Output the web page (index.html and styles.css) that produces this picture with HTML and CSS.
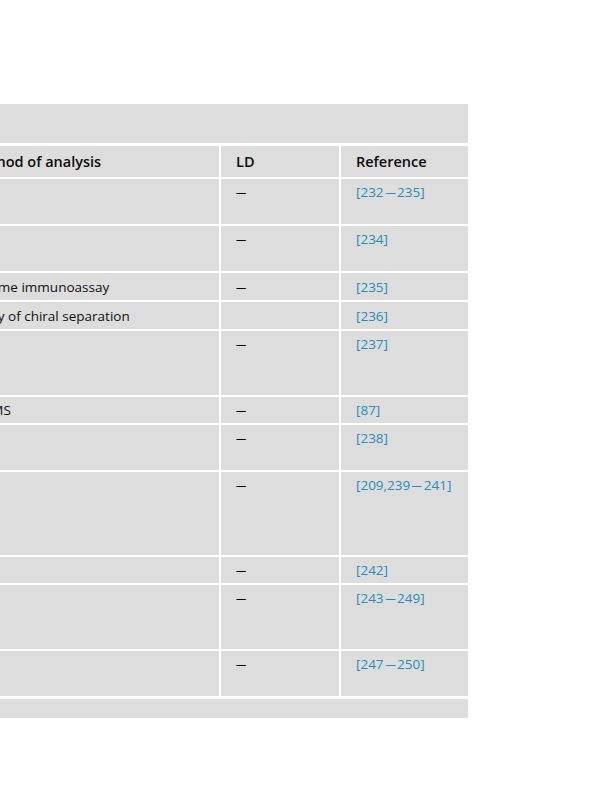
FILE: index.html
```html
<!DOCTYPE html>
<html lang="en">
<head>
<meta charset="utf-8">
<title>Table</title>
<link rel="stylesheet" href="styles.css">
</head>
<body>
<div class="sheet">
  <div class="caption"></div>
  <table class="grid">
    <colgroup>
      <col class="col-method">
      <col class="col-ld">
      <col class="col-ref">
    </colgroup>
    <thead>
      <tr class="head">
        <th>Method of analysis</th>
        <th>LD</th>
        <th>Reference</th>
      </tr>
    </thead>
    <tbody>
      <tr class="r2"><td></td><td><span class="dash ld">—</span></td><td><a class="ref">[232<span class="dash">—</span>235]</a></td></tr>
      <tr class="r2"><td></td><td><span class="dash ld">—</span></td><td><a class="ref">[234]</a></td></tr>
      <tr class="r1"><td>Enzyme immunoassay</td><td><span class="dash ld">—</span></td><td><a class="ref">[235]</a></td></tr>
      <tr class="r1"><td>Study of chiral separation</td><td></td><td><a class="ref">[236]</a></td></tr>
      <tr class="r3"><td></td><td><span class="dash ld">—</span></td><td><a class="ref">[237]</a></td></tr>
      <tr class="r1s"><td>LC–MS</td><td><span class="dash ld">—</span></td><td><a class="ref">[87]</a></td></tr>
      <tr class="r2"><td></td><td><span class="dash ld">—</span></td><td><a class="ref">[238]</a></td></tr>
      <tr class="r4"><td></td><td><span class="dash ld">—</span></td><td><a class="ref">[209,239<span class="dash">—</span>241]</a></td></tr>
      <tr class="r1s"><td></td><td><span class="dash ld">—</span></td><td><a class="ref">[242]</a></td></tr>
      <tr class="r3"><td></td><td><span class="dash ld">—</span></td><td><a class="ref">[243<span class="dash">—</span>249]</a></td></tr>
      <tr class="r2"><td></td><td><span class="dash ld">—</span></td><td><a class="ref">[247<span class="dash">—</span>250]</a></td></tr>
    </tbody>
  </table>
  <div class="foot"></div>
</div>
</body>
</html>
```

FILE: styles.css
```css
html, body {
  margin: 0;
  padding: 0;
  background: #ffffff;
}

body {
  font-family: "Open Sans", "Noto Sans", sans-serif;
  color: #111111;
  overflow: hidden;
}

.sheet {
  width: 518px;
  margin: 104px 0 0 -48px;
}

.caption {
  height: 39px;
  margin-right: 2px;
  background: #dedddd;
}

.foot {
  height: 19px;
  margin-top: 1px;
  margin-right: 2px;
  background: #dedddd;
}

.grid {
  width: 518px;
  table-layout: fixed;
  border-collapse: separate;
  border-spacing: 2px;
  margin-top: 1px;
  background: #ffffff;
}

.col-method { width: 265px; }
.col-ld { width: 118px; }
.col-ref { width: 127px; }

.grid th,
.grid td {
  background: #dedddd;
  padding: 4px 6px 5px 15px;
  text-align: left;
  vertical-align: top;
  line-height: 18px;
  white-space: nowrap;
  overflow: hidden;
  box-sizing: border-box;
}

.grid th {
  font-size: 14.5px;
  font-weight: 600;
  color: #0c0c0c;
  height: 31px;
  vertical-align: middle;
  padding-top: 0;
  padding-bottom: 0;
}

.grid td {
  font-size: 13.5px;
}

.r1 td { height: 27px; vertical-align: middle; padding-top: 0; padding-bottom: 0; }
.r1s td { height: 26px; vertical-align: middle; padding-top: 0; padding-bottom: 0; }
.r2 td { height: 45px; }
.r3 td { height: 64px; }
.r4 td { height: 83px; }

.ref {
  color: #2a8cb5;
  text-decoration: none;
}

.dash {
  display: inline-block;
  transform: scaleX(0.76);
  transform-origin: center;
}

.dash.ld {
  transform-origin: left center;
  color: #000000;
}
```
